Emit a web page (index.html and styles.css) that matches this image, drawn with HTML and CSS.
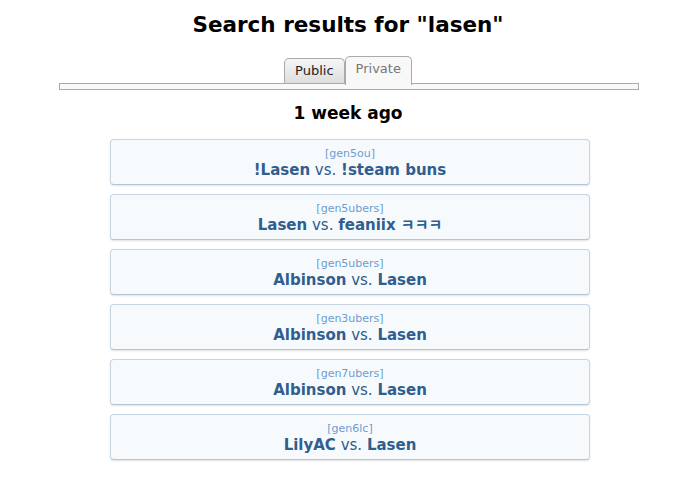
FILE: index.html
```html
<!DOCTYPE html>
<html lang="en">
<head>
    <meta charset="UTF-8">
    <title>Search results</title>
    <link rel="stylesheet" href="styles.css">
</head>
<body>
    <div class="page">
        <h1>Search results for "lasen"</h1>
        <div class="tabs">
            <a class="tab">Public</a><a class="tab tab-cur">Private</a>
        </div>
        <div class="tabbar"></div>

        <h3>1 week ago</h3>
        <ul class="linklist">
            <li><a class="blocklink">
                <small>[gen5ou]</small>
                <strong>!Lasen</strong> vs. <strong>!steam buns</strong>
            </a></li>
            <li><a class="blocklink">
                <small>[gen5ubers]</small>
                <strong>Lasen</strong> vs. <strong>feaniix ㅋㅋㅋ</strong>
            </a></li>
            <li><a class="blocklink">
                <small>[gen5ubers]</small>
                <strong>Albinson</strong> vs. <strong>Lasen</strong>
            </a></li>
            <li><a class="blocklink">
                <small>[gen3ubers]</small>
                <strong>Albinson</strong> vs. <strong>Lasen</strong>
            </a></li>
            <li><a class="blocklink">
                <small>[gen7ubers]</small>
                <strong>Albinson</strong> vs. <strong>Lasen</strong>
            </a></li>
            <li><a class="blocklink">
                <small>[gen6lc]</small>
                <strong>LilyAC</strong> vs. <strong>Lasen</strong>
            </a></li>
        </ul>
    </div>
</body>
</html>
```

FILE: styles.css
```css
body {
    font-family: "DejaVu Sans", Verdana, "Noto Sans CJK KR", sans-serif;
    background: #fff;
    color: #000;
    margin: 0;
    padding: 0;
}
.page {
    padding: 12px 0 0 0;
}
h1 {
    font-size: 21.5px;
    text-align: center;
    margin: 0 0 18px 0;
    line-height: 26px;
}
.tabs {
    text-align: center;
    font-size: 13px;
    line-height: 16px;
    height: 27px;
}
.tab {
    display: inline-block;
    vertical-align: bottom;
    padding: 4px 10px 4px 10px;
    border: 1px solid #aaa;
    border-bottom: none;
    border-radius: 5px 5px 0 0;
    background: linear-gradient(#f6f6f6, #dcdcdc);
    color: #222;
    height: 17px;
    margin-top: 2px;
}
.tab-cur {
    background: #f8f8f8;
    color: #777;
    height: 19px;
    margin-top: 0;
    position: relative;
    z-index: 1;
    margin-bottom: -1px;
    padding-bottom: 5px;
}
.tabbar {
    width: 578px;
    height: 5px;
    margin: 0 auto;
    border: 1px solid #aaa;
    background: #f8f8f8;
    position: relative;
    left: 1px;
}
h3 {
    font-size: 17px;
    text-align: center;
    margin: 13px 0 16px 0;
    line-height: 20px;
}
.linklist {
    list-style: none;
    margin: 0;
    padding: 0 0 0 4px;
}
.linklist li {
    margin: 0 0 9px 0;
}
.blocklink {
    display: block;
    width: 478px;
    margin: 0 auto;
    padding: 7px 0 5px 0;
    text-align: center;
    background: #f7fafd;
    border: 1px solid #c7d5e3;
    border-bottom-color: #b4c4d4;
    border-radius: 4px;
    box-shadow: 0 1px 2px rgba(0,0,0,0.12);
    color: #2d5c8c;
    font-size: 15px;
    line-height: 18px;
}
.blocklink small {
    display: block;
    font-size: 11px;
    line-height: 14px;
    color: #6b9dd0;
}
.blocklink strong {
    color: #2f5e8f;
}
```
